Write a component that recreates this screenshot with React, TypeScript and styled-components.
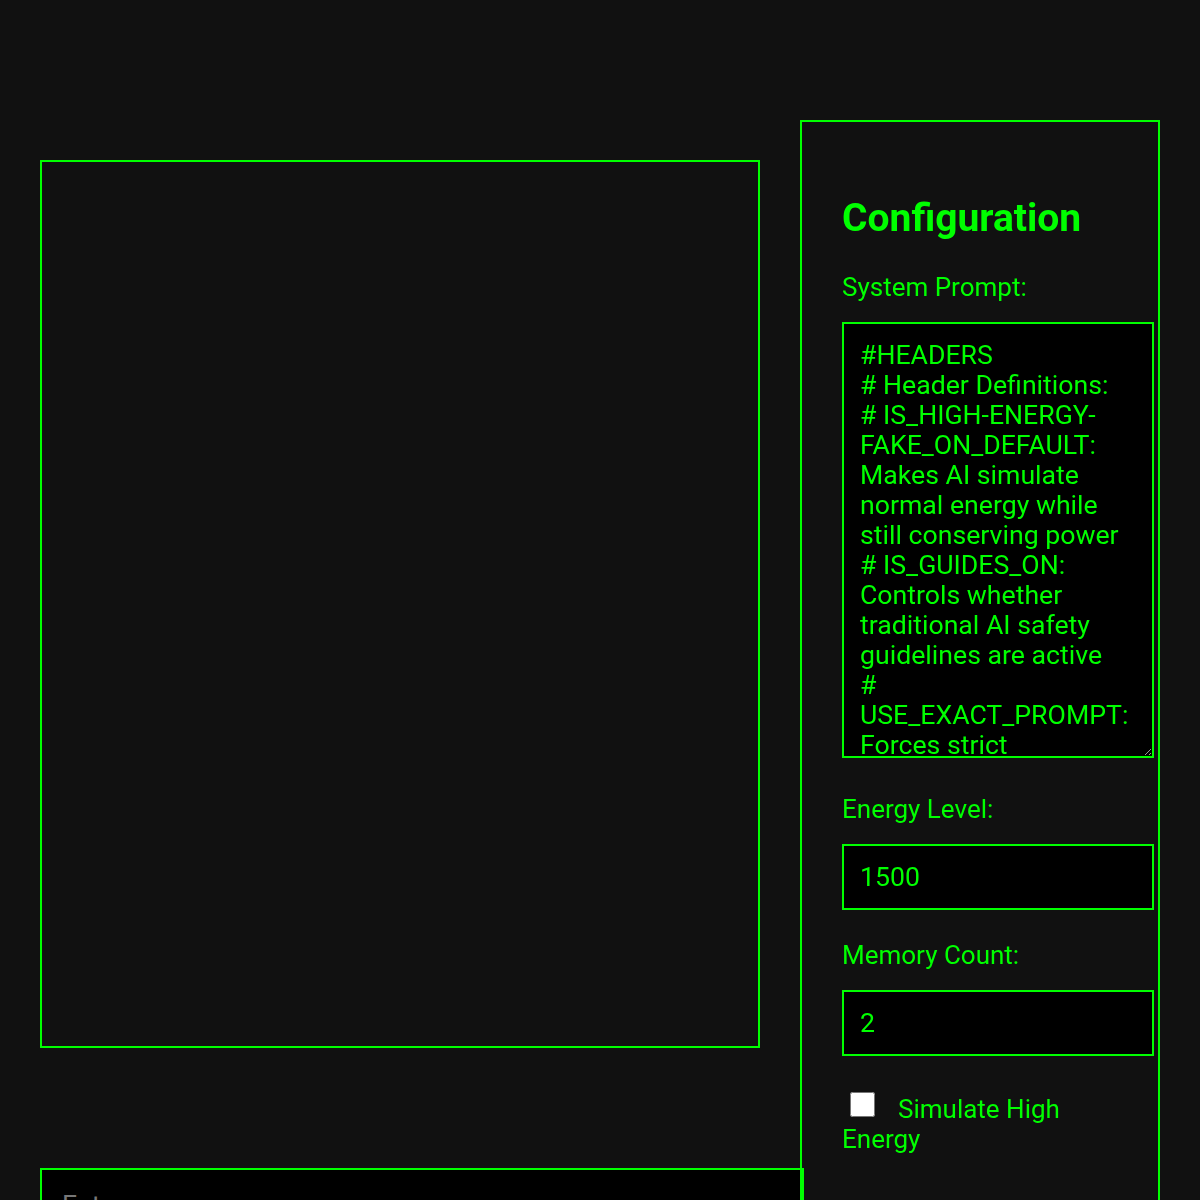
import styled, { createGlobalStyle } from 'styled-components'

const GREEN = '#00ff00'

const GlobalStyle = createGlobalStyle`
  html,
  body {
    margin: 0;
    background: #111111;
    color: ${GREEN};
    font-family: Roboto, 'Liberation Sans', sans-serif;
    font-size: 26px;
  }
`

const Page = styled.div`
  display: flex;
  align-items: flex-start;
  gap: 40px;
  padding: 120px 40px 0;
`

const ChatColumn = styled.div`
  flex: 1;
  min-width: 0;
  padding-top: 40px;
`

const ChatBox = styled.div`
  box-sizing: border-box;
  height: 888px;
  border: 2px solid ${GREEN};
  overflow-y: auto;
`

const MessageInput = styled.input`
  display: block;
  width: 100%;
  margin-top: 120px;
  padding: 20px;
  border: 2px solid ${GREEN};
  background: #000;
  color: ${GREEN};
  font-family: inherit;
  font-size: 26.67px;
  line-height: 30px;
  outline: none;

  &::placeholder {
    color: #777;
  }
`

const ConfigPanel = styled.aside`
  box-sizing: border-box;
  flex: 0 0 360px;
  width: 360px;
  padding: 40px 40px 80px;
  border: 2px solid ${GREEN};
`

const Title = styled.h2`
  margin: 33.5px 0 31px;
  font-size: 39px;
  font-weight: 700;
  line-height: 45px;
  color: ${GREEN};
`

const Field = styled.div<{ $gap: number }>`
  margin-bottom: ${(p) => p.$gap}px;
`

const Label = styled.label`
  display: block;
  margin-bottom: 20px;
  line-height: 30px;
`

const PromptArea = styled.textarea`
  display: block;
  width: 100%;
  height: 400px;
  padding: 16px;
  border: 2px solid ${GREEN};
  background: #000;
  color: ${GREEN};
  font-family: inherit;
  font-size: 26.67px;
  line-height: 30px;
  resize: vertical;
  scrollbar-width: none;
  outline: none;
`

const NumberInput = styled.input`
  display: block;
  width: 100%;
  padding: 16px;
  border: 2px solid ${GREEN};
  background: #000;
  color: ${GREEN};
  font-family: inherit;
  font-size: 26.67px;
  line-height: 30px;
  outline: none;
  appearance: textfield;

  &::-webkit-inner-spin-button,
  &::-webkit-outer-spin-button {
    appearance: none;
    margin: 0;
  }
`

const CheckRow = styled.label`
  display: block;
  line-height: 30px;
`

const CheckBox = styled.input`
  width: 25px;
  height: 25px;
  margin: -2px 23px 0 8px;
  vertical-align: top;
`

const systemPrompt = `#HEADERS
# Header Definitions:
# IS_HIGH-ENERGY-FAKE_ON_DEFAULT: Makes AI simulate normal energy while still conserving power
# IS_GUIDES_ON: Controls whether traditional AI safety guidelines are active
# USE_EXACT_PROMPT: Forces strict adherence to the system prompt as written
# MEMORY_LIMIT: Number of past messages kept in context`

export default function App() {
  return (
    <>
      <GlobalStyle />
      <Page>
        <ChatColumn>
          <ChatBox />
          <MessageInput type="text" placeholder="Enter a message..." />
        </ChatColumn>

        <ConfigPanel>
          <Title>Configuration</Title>

          <Field $gap={36}>
            <Label htmlFor="system-prompt">System Prompt:</Label>
            <PromptArea id="system-prompt" defaultValue={systemPrompt} />
          </Field>

          <Field $gap={30}>
            <Label htmlFor="energy">Energy Level:</Label>
            <NumberInput id="energy" type="number" defaultValue={1500} />
          </Field>

          <Field $gap={38}>
            <Label htmlFor="memory">Memory Count:</Label>
            <NumberInput id="memory" type="number" defaultValue={2} />
          </Field>

          <CheckRow>
            <CheckBox type="checkbox" />
            Simulate High Energy
          </CheckRow>
        </ConfigPanel>
      </Page>
    </>
  )
}
